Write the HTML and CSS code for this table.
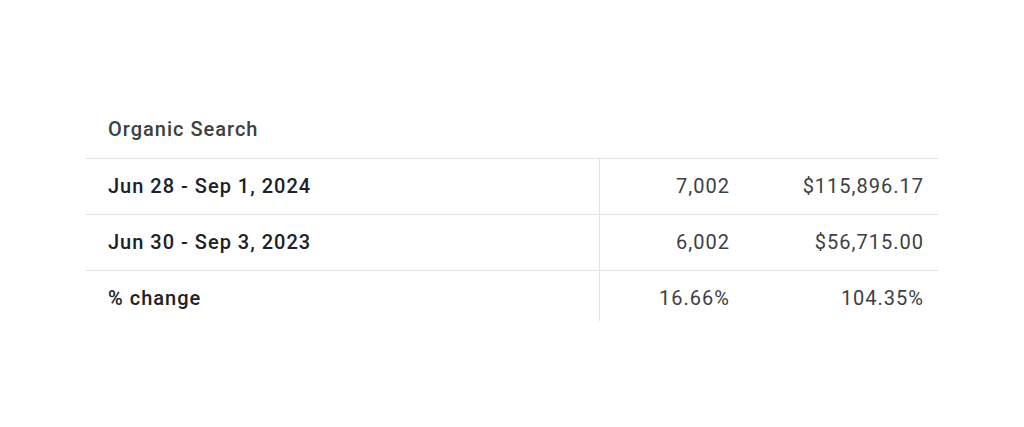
FILE: index.html
```html
<!DOCTYPE html>
<html>
<head>
<meta charset="utf-8">
<link rel="stylesheet" href="styles.css">
</head>
<body>
<div class="page">
  <div class="card">
    <div class="title">Organic Search</div>
    <div class="table">
      <div class="row">
        <div class="label">Jun 28 - Sep 1, 2024</div>
        <div class="num c2">7,002</div>
        <div class="num c3">$115,896.17</div>
      </div>
      <div class="row">
        <div class="label">Jun 30 - Sep 3, 2023</div>
        <div class="num c2">6,002</div>
        <div class="num c3">$56,715.00</div>
      </div>
      <div class="row last">
        <div class="label">% change</div>
        <div class="num c2">16.66%</div>
        <div class="num c3">104.35%</div>
      </div>
    </div>
  </div>
</div>
</body>
</html>
```

FILE: styles.css
```css
html, body {
  margin: 0;
  padding: 0;
  background: #ffffff;
}
body {
  font-family: Roboto, "Liberation Sans", Arial, sans-serif;
  color: #202124;
  letter-spacing: 1px;
}
.page {
  width: 1024px;
  height: 427px;
  padding-top: 103px;
  box-sizing: border-box;
}
.card {
  margin-left: 86px;
  width: 852px;
}
.title {
  height: 56px;
  line-height: 52px;
  padding-left: 22px;
  font-size: 20px;
  font-weight: 500;
  color: #3c4043;
  border-bottom: 1px solid #e3e3e3;
  box-sizing: border-box;
}
.row {
  display: grid;
  grid-template-columns: 514px 144px 194px;
  height: 56px;
  border-bottom: 1px solid #e3e3e3;
  box-sizing: border-box;
  font-size: 20px;
}
.row > div {
  line-height: 55px;
  height: 55px;
}
.row.last {
  border-bottom: none;
  height: 50px;
}
.row.last > div {
  height: 50px;
}
.label {
  padding-left: 22px;
  font-weight: 500;
  color: #202124;
  border-right: 1px solid #e3e3e3;
}
.num {
  text-align: right;
  padding-right: 14px;
  color: #3c4043;
}
```
